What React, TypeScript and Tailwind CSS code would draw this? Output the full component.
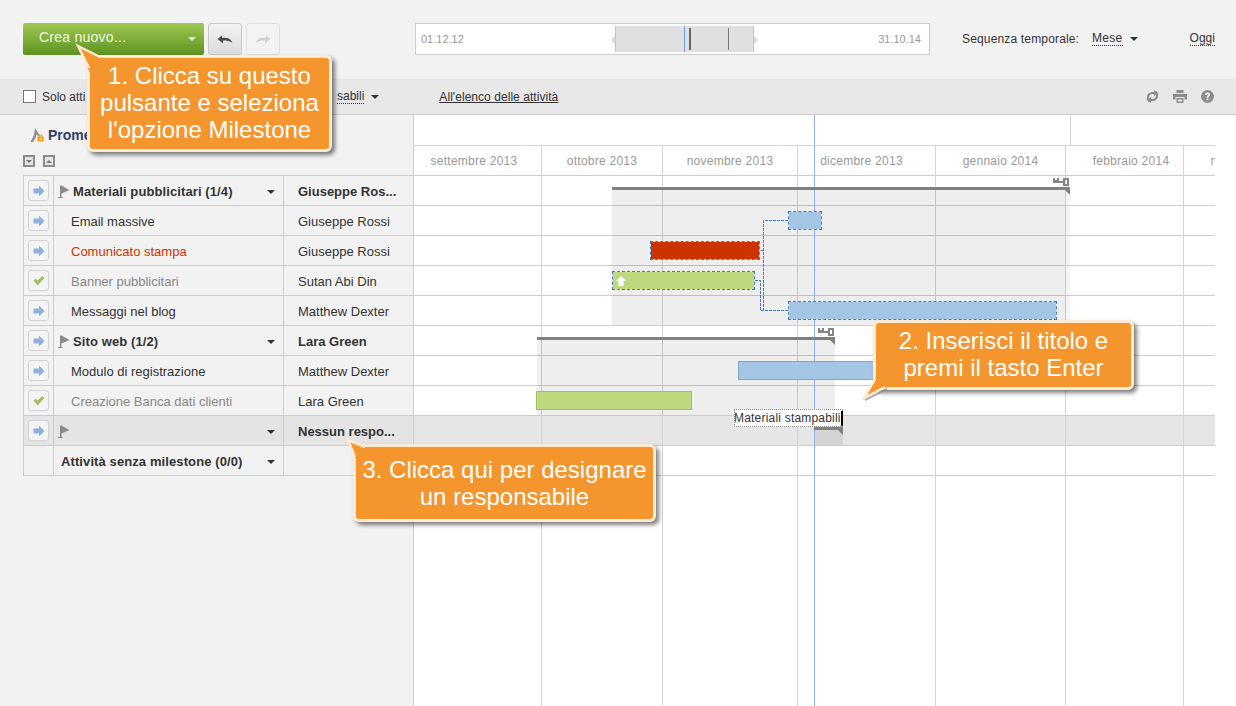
const ff = "font-['Liberation_Sans',Arial,sans-serif]";

function Caret({ className = "" }: { className?: string }) {
  return (
    <svg width="8" height="4" viewBox="0 0 8 4" className={className}>
      <path d="M0 0h8L4 4z" fill="currentColor" />
    </svg>
  );
}

function ArrowIcon() {
  return (
    <svg width="12" height="12" viewBox="0 0 12 12">
      <path d="M0.5 3.5h5.5V0.5L11.5 6 6 11.5V8.5H0.5z" fill="#8fb0d8" />
    </svg>
  );
}

function CheckIcon() {
  return (
    <svg width="12" height="10" viewBox="0 0 12 10">
      <path d="M0.5 4.5L2.5 2.5 4.5 4.5 9.5 0 11.5 2 4.5 9.5z" fill="#a4bd62" />
    </svg>
  );
}

function Flag() {
  return (
    <svg width="12" height="13" viewBox="0 0 12 13" className="shrink-0">
      <path d="M2 0.5h1.5L11.5 5 3.5 8.5V12H4.5V13H0V12H2z" fill="#8b8b8b" />
    </svg>
  );
}

function KeyMark() {
  return (
    <svg width="16" height="8" viewBox="0 0 16 8">
      <path d="M0 0h2v2h2V0h2v3h4V0h6v8h-6V5H0zM12 2v4h2V2z" fill="#858585" fillRule="evenodd" />
    </svg>
  );
}

type Row = {
  name: string;
  owner: string;
  icon?: "arrow" | "check" | "none";
  group?: boolean;
  color?: string;
  active?: boolean;
};

const rows: Row[] = [
  { name: "Materiali pubblicitari (1/4)", owner: "Giuseppe Ros...", group: true },
  { name: "Email massive", owner: "Giuseppe Rossi" },
  { name: "Comunicato stampa", owner: "Giuseppe Rossi", color: "text-[#cc3300]" },
  { name: "Banner pubblicitari", owner: "Sutan Abi Din", icon: "check", color: "text-[#888888]" },
  { name: "Messaggi nel blog", owner: "Matthew Dexter" },
  { name: "Sito web (1/2)", owner: "Lara Green", group: true },
  { name: "Modulo di registrazione", owner: "Matthew Dexter" },
  { name: "Creazione Banca dati clienti", owner: "Lara Green", icon: "check", color: "text-[#888888]" },
  { name: "", owner: "Nessun respo...", group: true, active: true },
  { name: "Attività senza milestone (0/0)", owner: "", group: true, icon: "none" },
];

const months = [
  { label: "settembre 2013", w: "w-[128px] pr-[7px]" },
  { label: "ottobre 2013", w: "w-[121px]" },
  { label: "novembre 2013", w: "w-[135px]" },
  { label: "dicembre 2013", w: "w-[138px] pr-[10px]" },
  { label: "gennaio 2014", w: "w-[130px]" },
  { label: "febbraio 2014", w: "w-[118px] pl-[13px]" },
  { label: "marzo 2014", w: "w-[120px]" },
];

function TaskRow({ row }: { row: Row }) {
  const noFlag = row.icon === "none";
  return (
    <div className={`flex h-[30px] border-b border-[#cccccc] ${row.active ? "bg-[#e4e4e4]" : ""}`}>
      <div className="flex w-[30px] shrink-0 items-center justify-center border-r border-[#cccccc]">
        {!noFlag && (
          <span className="flex h-[21px] w-[21px] items-center justify-center rounded-[3px] border border-[#d2d2d2] bg-[#f4f4f4]">
            {row.icon === "check" ? <CheckIcon /> : <ArrowIcon />}
          </span>
        )}
      </div>
      <div className="flex w-[230px] shrink-0 items-center border-r border-[#cccccc] pr-[8px] pt-[2px]">
        {row.group ? (
          <>
            <span className={`flex flex-1 items-center gap-[3px] ${noFlag ? "pl-[7px]" : "pl-[4px]"}`}>
              {!noFlag && <Flag />}
              <span className="font-bold tracking-[0.1px] text-[#333333]">{row.name}</span>
            </span>
            <Caret className="text-[#333333]" />
          </>
        ) : (
          <span className={`pl-[17px] ${row.color ?? "text-[#333333]"}`}>{row.name}</span>
        )}
      </div>
      <div className={`flex w-[130px] shrink-0 items-center border-r border-[#cccccc] pl-[14px] pt-[2px] text-[#333333] ${row.group ? "font-bold" : ""}`}>
        {row.owner}
      </div>
    </div>
  );
}

function Callout({
  className,
  lines,
  tail,
}: {
  className: string;
  lines: string[];
  tail: React.ReactNode;
}) {
  return (
    <div className={`absolute z-30 flex flex-col items-center justify-center rounded-[6px] border-[3px] border-[#fdebd3] bg-[#f5952d] text-center text-[24px] leading-[27px] text-white shadow-[3px_3px_4px_rgba(0,0,0,0.5)] ${className}`}>
      {tail}
      {lines.map((l) => (
        <div key={l} className="relative">{l}</div>
      ))}
    </div>
  );
}

function Bar({ className, children }: { className: string; children?: React.ReactNode }) {
  return <div className={`absolute ${className}`}>{children}</div>;
}

function Toolbar() {
  return (
    <div className="flex h-[79px] items-start bg-[#f2f2f2] pt-[23px]">
      <button className="ml-[23px] flex h-[32px] w-[181px] items-center justify-between rounded-[2px] bg-gradient-to-b from-[#9fc952] to-[#5e9221] pl-[16px] pr-[8px] text-[14px] text-[#f0f8e0]">
        <span className="pb-[3px] tracking-[0.25px]">Crea nuovo...</span>
        <Caret className="text-[#e8f2d8]" />
      </button>
      <button className="ml-[4px] flex h-[32px] w-[34px] items-center justify-center rounded-[3px] border border-[#c8c8c8] bg-gradient-to-b from-[#f2f2f2] to-[#dcdcdc]">
        <svg width="16" height="9" viewBox="0 0 16 9">
          <path d="M0.5 4L5 0.5V3C10 2 14 3.5 15.5 8 13 6 10 5.5 6 5.5V8.5z" fill="#4b4b4b" />
        </svg>
      </button>
      <button className="ml-[4px] flex h-[32px] w-[34px] items-center justify-center rounded-[3px] border border-[#e0e0e0] bg-[#f3f3f3]">
        <svg width="16" height="9" viewBox="0 0 16 9">
          <path d="M15.5 4L11 0.5V3C6 2 2 3.5 0.5 8 3 6 6 5.5 10 5.5V8.5z" fill="#d0d0d0" />
        </svg>
      </button>
      <div className="relative ml-[135px] flex h-[32px] w-[515px] items-center justify-between border border-[#cccccc] bg-white pl-[5px] pr-[8px] text-[11px] text-[#999999]">
        <span>01.12.12</span>
        <span>31.10.14</span>
        <div className="absolute left-[199px] top-[2px] h-[26px] w-[139px] border-x border-[#c4c4c4] bg-[#e0e0e0]">
          <span className="absolute left-[-5px] top-[10px] h-0 w-0 border-y-[4px] border-r-[4px] border-y-transparent border-r-[#d8d8d8]" />
          <span className="absolute right-[-5px] top-[10px] h-0 w-0 border-y-[4px] border-l-[4px] border-y-transparent border-l-[#d8d8d8]" />
          <span className="absolute left-[68px] top-0 h-full w-px bg-[#6f9cf0]" />
          <span className="absolute left-[73px] top-[2px] h-[22px] w-[2px] bg-[#666666]" />
          <span className="absolute left-[112px] top-[2px] h-[22px] w-px bg-[#777777]" />
        </div>
      </div>
      <div className="ml-[32px] flex h-[32px] items-center text-[12px] text-[#333333]">
        <span className="w-[130px] tracking-[0.16px]">Sequenza temporale:</span>
        <span className="border-b border-dotted border-[#333333] leading-[13px] tracking-[0.3px]">Mese</span>
        <Caret className="ml-[7px] text-[#333333]" />
        <span className="ml-[52px] border-b border-dotted border-[#333333] leading-[13px]">Oggi</span>
      </div>
    </div>
  );
}

function SubToolbar() {
  return (
    <div className="flex h-[36px] items-center border-b border-[#cccccc] bg-[#e8e8e8] text-[12px] text-[#333333]">
      <span className="ml-[23px] h-[13px] w-[13px] border border-[#777777] bg-white" />
      <span className="ml-[6px] w-[295px]">Solo atti</span>
      <span className="border-b border-dotted border-[#333333] leading-[13px]">sabili</span>
      <Caret className="ml-[7px] text-[#333333]" />
      <a className="ml-[60px] tracking-[0.05px] text-[#333333] underline">All'elenco delle attività</a>
      <div className="ml-auto mr-[22px] flex items-center gap-[14px]">
        <svg width="13" height="13" viewBox="0 0 13 13" fill="none">
          <path d="M3 11.5C0.5 8 2 3.5 6 3H8" stroke="#8c8c8c" strokeWidth="2" />
          <path d="M10 1.5C12.5 5 11 9.5 7 10H5" stroke="#8c8c8c" strokeWidth="2" />
          <path d="M8 0v6l3.5-3zM5 7v6l-3.5-3z" fill="#8c8c8c" />
        </svg>
        <svg width="14" height="13" viewBox="0 0 14 13">
          <path d="M3.5 0h7v3h-7zM0 4h14v5.5h-2.5V7h-9v2.5H0zM3.5 8h7v5h-7zM5 9.5v2h4v-2z" fill="#8c8c8c" fillRule="evenodd" />
        </svg>
        <svg width="13" height="13" viewBox="0 0 13 13">
          <circle cx="6.5" cy="6.5" r="6.5" fill="#8c8c8c" />
          <path d="M4 5C4 1.8 9 1.8 9 4.8 9 6.4 7.4 6.4 7.4 7.8H5.6C5.6 5.8 7.2 5.8 7.2 4.8 7.2 3.9 5.8 3.9 5.8 5zM5.6 8.6h1.8v1.7H5.6z" fill="#f0f0f0" />
        </svg>
      </div>
    </div>
  );
}

function LeftPanel() {
  return (
    <div className="flex w-[414px] shrink-0 flex-col border-r border-[#cccccc] bg-[#f2f2f2] pl-[23px] text-[13px]">
      <div className="flex h-[33px] items-center pl-[7px] pt-[6px]">
        <svg width="14" height="14" viewBox="0 0 14 14">
          <path d="M5 0L10 8H8L6.5 6 6 9 3 14H0.5L4 7z" fill="#8c8c8c" />
          <path d="M7.5 8.5h6v5h-6z" fill="#f59a00" />
          <path d="M9.5 10.5h2v1.5h-2z" fill="#ffffff" />
          <path d="M9 8.5V7h3v1.5" fill="none" stroke="#f59a00" />
        </svg>
        <span className="ml-[4px] text-[14px] font-bold leading-[16px] text-[#33406b]">Prome</span>
      </div>
      <div className="mb-[8px] mt-[7px] flex h-[12px] items-center gap-[8px]">
        <span className="flex h-[12px] w-[12px] items-center justify-center border-2 border-[#8c8c8c] bg-[#e4e4e4]">
          <Caret className="h-[3px] w-[6px] text-[#777777]" />
        </span>
        <span className="flex h-[12px] w-[12px] items-center justify-center border-2 border-[#8c8c8c] bg-[#e4e4e4]">
          <Caret className="h-[3px] w-[6px] rotate-180 text-[#777777]" />
        </span>
      </div>
      <div className="w-[391px] border-l border-t border-[#cccccc]">
        {rows.map((r, i) => (
          <TaskRow key={i} row={r} />
        ))}
      </div>
    </div>
  );
}

function Timeline() {
  return (
    <div className="relative h-full w-[801px] overflow-hidden bg-white text-[12px]">
      {/* top band */}
      <div className="flex h-[31px] border-b border-[#d4d4d4]">
        <div className="h-full w-[657px] border-r border-[#d4d4d4]" />
      </div>
      {/* months */}
      <div className="flex h-[30px] border-b border-[#cccccc]">
        {months.map((m) => (
          <div key={m.label} className={`flex h-full shrink-0 items-center justify-center whitespace-nowrap border-r border-[#d4d4d4] tracking-[0.25px] text-[#999999] ${m.w}`}>
            {m.label}
          </div>
        ))}
      </div>
      {/* row lines */}
      {rows.map((r, i) => (
        <div key={i} className={`h-[30px] border-b border-[#cccccc] ${r.active ? "bg-[#e6e6e6]" : ""}`} />
      ))}
      {/* month lines carry on below the rows */}
      <div className="absolute inset-x-0 bottom-0 top-[31px] flex">
        {months.map((m) => (
          <div key={m.label} className={`h-full shrink-0 border-r border-[#d4d4d4] ${m.w}`} />
        ))}
      </div>

      {/* group shading */}
      <Bar className="left-[198px] top-[75px] h-[135px] w-[453px] bg-black/[0.065]" />
      <Bar className="left-[651px] top-[75px] h-[135px] w-[5px] bg-black/[0.04]" />
      <Bar className="left-[123px] top-[225px] h-[75px] w-[298px] bg-black/[0.065]" />
      <Bar className="left-[400px] top-[315px] h-[15px] w-[29px] bg-black/[0.08]" />

      {/* today */}
      <Bar className="left-[400px] top-0 h-full w-px bg-[#8fb0f2]" />

      {/* group bars */}
      <Bar className="left-[198px] top-[72px] h-[3px] w-[458px] bg-[#808080]" />
      <Bar className="left-[651px] top-[75px] h-[5px] w-[5px] bg-[#808080] [clip-path:polygon(0_0,100%_0,100%_100%)]" />
      <Bar className="left-[639px] top-[63px] leading-[0]"><KeyMark /></Bar>

      <Bar className="left-[123px] top-[222px] h-[3px] w-[298px] bg-[#808080]" />
      <Bar className="left-[416px] top-[225px] h-[5px] w-[5px] bg-[#808080] [clip-path:polygon(0_0,100%_0,100%_100%)]" />
      <Bar className="left-[404px] top-[213px] leading-[0]"><KeyMark /></Bar>

      <Bar className="left-[400px] top-[312px] h-[3px] w-[29px] bg-[#808080]" />
      <Bar className="left-[424px] top-[315px] h-[5px] w-[5px] bg-[#808080] [clip-path:polygon(0_0,100%_0,100%_100%)]" />

      {/* links between tasks */}
      <svg className="absolute left-[340px] top-[95px]" width="40" height="110" viewBox="0 0 40 110" fill="none">
        <path d="M34 10.5H9.5V100.5H34" stroke="#3f7cc8" strokeDasharray="3 1" />
        <path d="M6.5 40.5H9.5" stroke="#3f7cc8" />
        <path d="M1 70.5H6.5V100.5H10" stroke="#3f7cc8" strokeDasharray="3 1" />
      </svg>

      {/* tasks */}
      <Bar className="left-[374px] top-[96px] h-[19px] w-[34px] border border-dashed border-[#3f7cc8] bg-[#a4c6e5] bg-clip-padding" />
      <Bar className="left-[236px] top-[126px] h-[19px] w-[110px] border border-dashed border-[#3f7cc8] bg-[#cc3300] bg-clip-padding" />
      <Bar className="left-[198px] top-[156px] flex h-[19px] w-[143px] items-center border border-dashed border-[#3f7cc8] bg-[#bcd97e] bg-clip-padding pl-[3px]">
        <svg width="10" height="10" viewBox="0 0 10 10">
          <path d="M5 0l5 5H7.5v5h-5V5H0z" fill="#ffffff" />
        </svg>
      </Bar>
      <Bar className="left-[374px] top-[186px] h-[19px] w-[269px] border border-dashed border-[#3f7cc8] bg-[#a4c6e5] bg-clip-padding" />
      <Bar className="left-[324px] top-[246px] h-[19px] w-[160px] border border-[#82a5c8] bg-[#a4c6e5]" />
      <Bar className="left-[122px] top-[276px] h-[19px] w-[156px] border border-[#a0c068] bg-[#bcd97e]" />

      {/* title being typed */}
      <Bar className="left-[320px] top-[294px] flex h-[18px] w-[109px] items-center whitespace-nowrap border border-dotted border-[#888888] bg-white leading-[16px] tracking-[0.2px] text-[#333333]">
        <span className="-ml-px">Materiali stampabili</span>
        <span className="h-[15px] w-[2px] shrink-0 bg-black" />
      </Bar>
    </div>
  );
}

export default function App() {
  return (
    <div className={`relative h-[706px] w-[1236px] overflow-hidden bg-white ${ff}`}>
      <Toolbar />
      <SubToolbar />
      <div className="flex h-[591px]">
        <LeftPanel />
        <Timeline />
      </div>

      <Callout
        className="left-[87px] top-[55px] h-[97px] w-[245px] pb-[2px]"
        lines={["1. Clicca su questo", "pulsante e seleziona", "l'opzione Milestone"]}
        tail={
          <svg className="absolute left-[-16px] top-[-15px]" width="40" height="32" viewBox="0 0 40 32">
            <path d="M4 3L16 30 32 18z" fill="#f5952d" />
            <path d="M15 25L4 3 26 14" fill="none" stroke="#fdebd3" strokeWidth="2.5" />
          </svg>
        }
      />
      <Callout
        className="left-[873px] top-[320px] h-[70px] w-[261px] pb-[2px]"
        lines={["2. Inserisci il titolo e", "premi il tasto Enter"]}
        tail={
          <svg className="absolute bottom-[-15px] left-[-15px]" width="40" height="32" viewBox="0 0 40 32">
            <path d="M4 30L26 19" fill="none" stroke="#8a8a8a" strokeWidth="2" opacity="0.7" />
            <path d="M3 28L17 4 30 15z" fill="#f5952d" />
            <path d="M14 9L3 28 24 17" fill="none" stroke="#fdebd3" strokeWidth="2.5" />
          </svg>
        }
      />
      <Callout
        className="left-[353px] top-[444px] h-[78px] w-[303px]"
        lines={["3. Clicca qui per designare", "un responsabile"]}
        tail={
          <svg className="absolute left-[-9px] top-[-10px]" width="40" height="32" viewBox="0 0 40 32">
            <path d="M1 3L10 25 26 13z" fill="#f5952d" />
            <path d="M8 20L1 3 18 10" fill="none" stroke="#fdebd3" strokeWidth="2.5" />
          </svg>
        }
      />
    </div>
  );
}
